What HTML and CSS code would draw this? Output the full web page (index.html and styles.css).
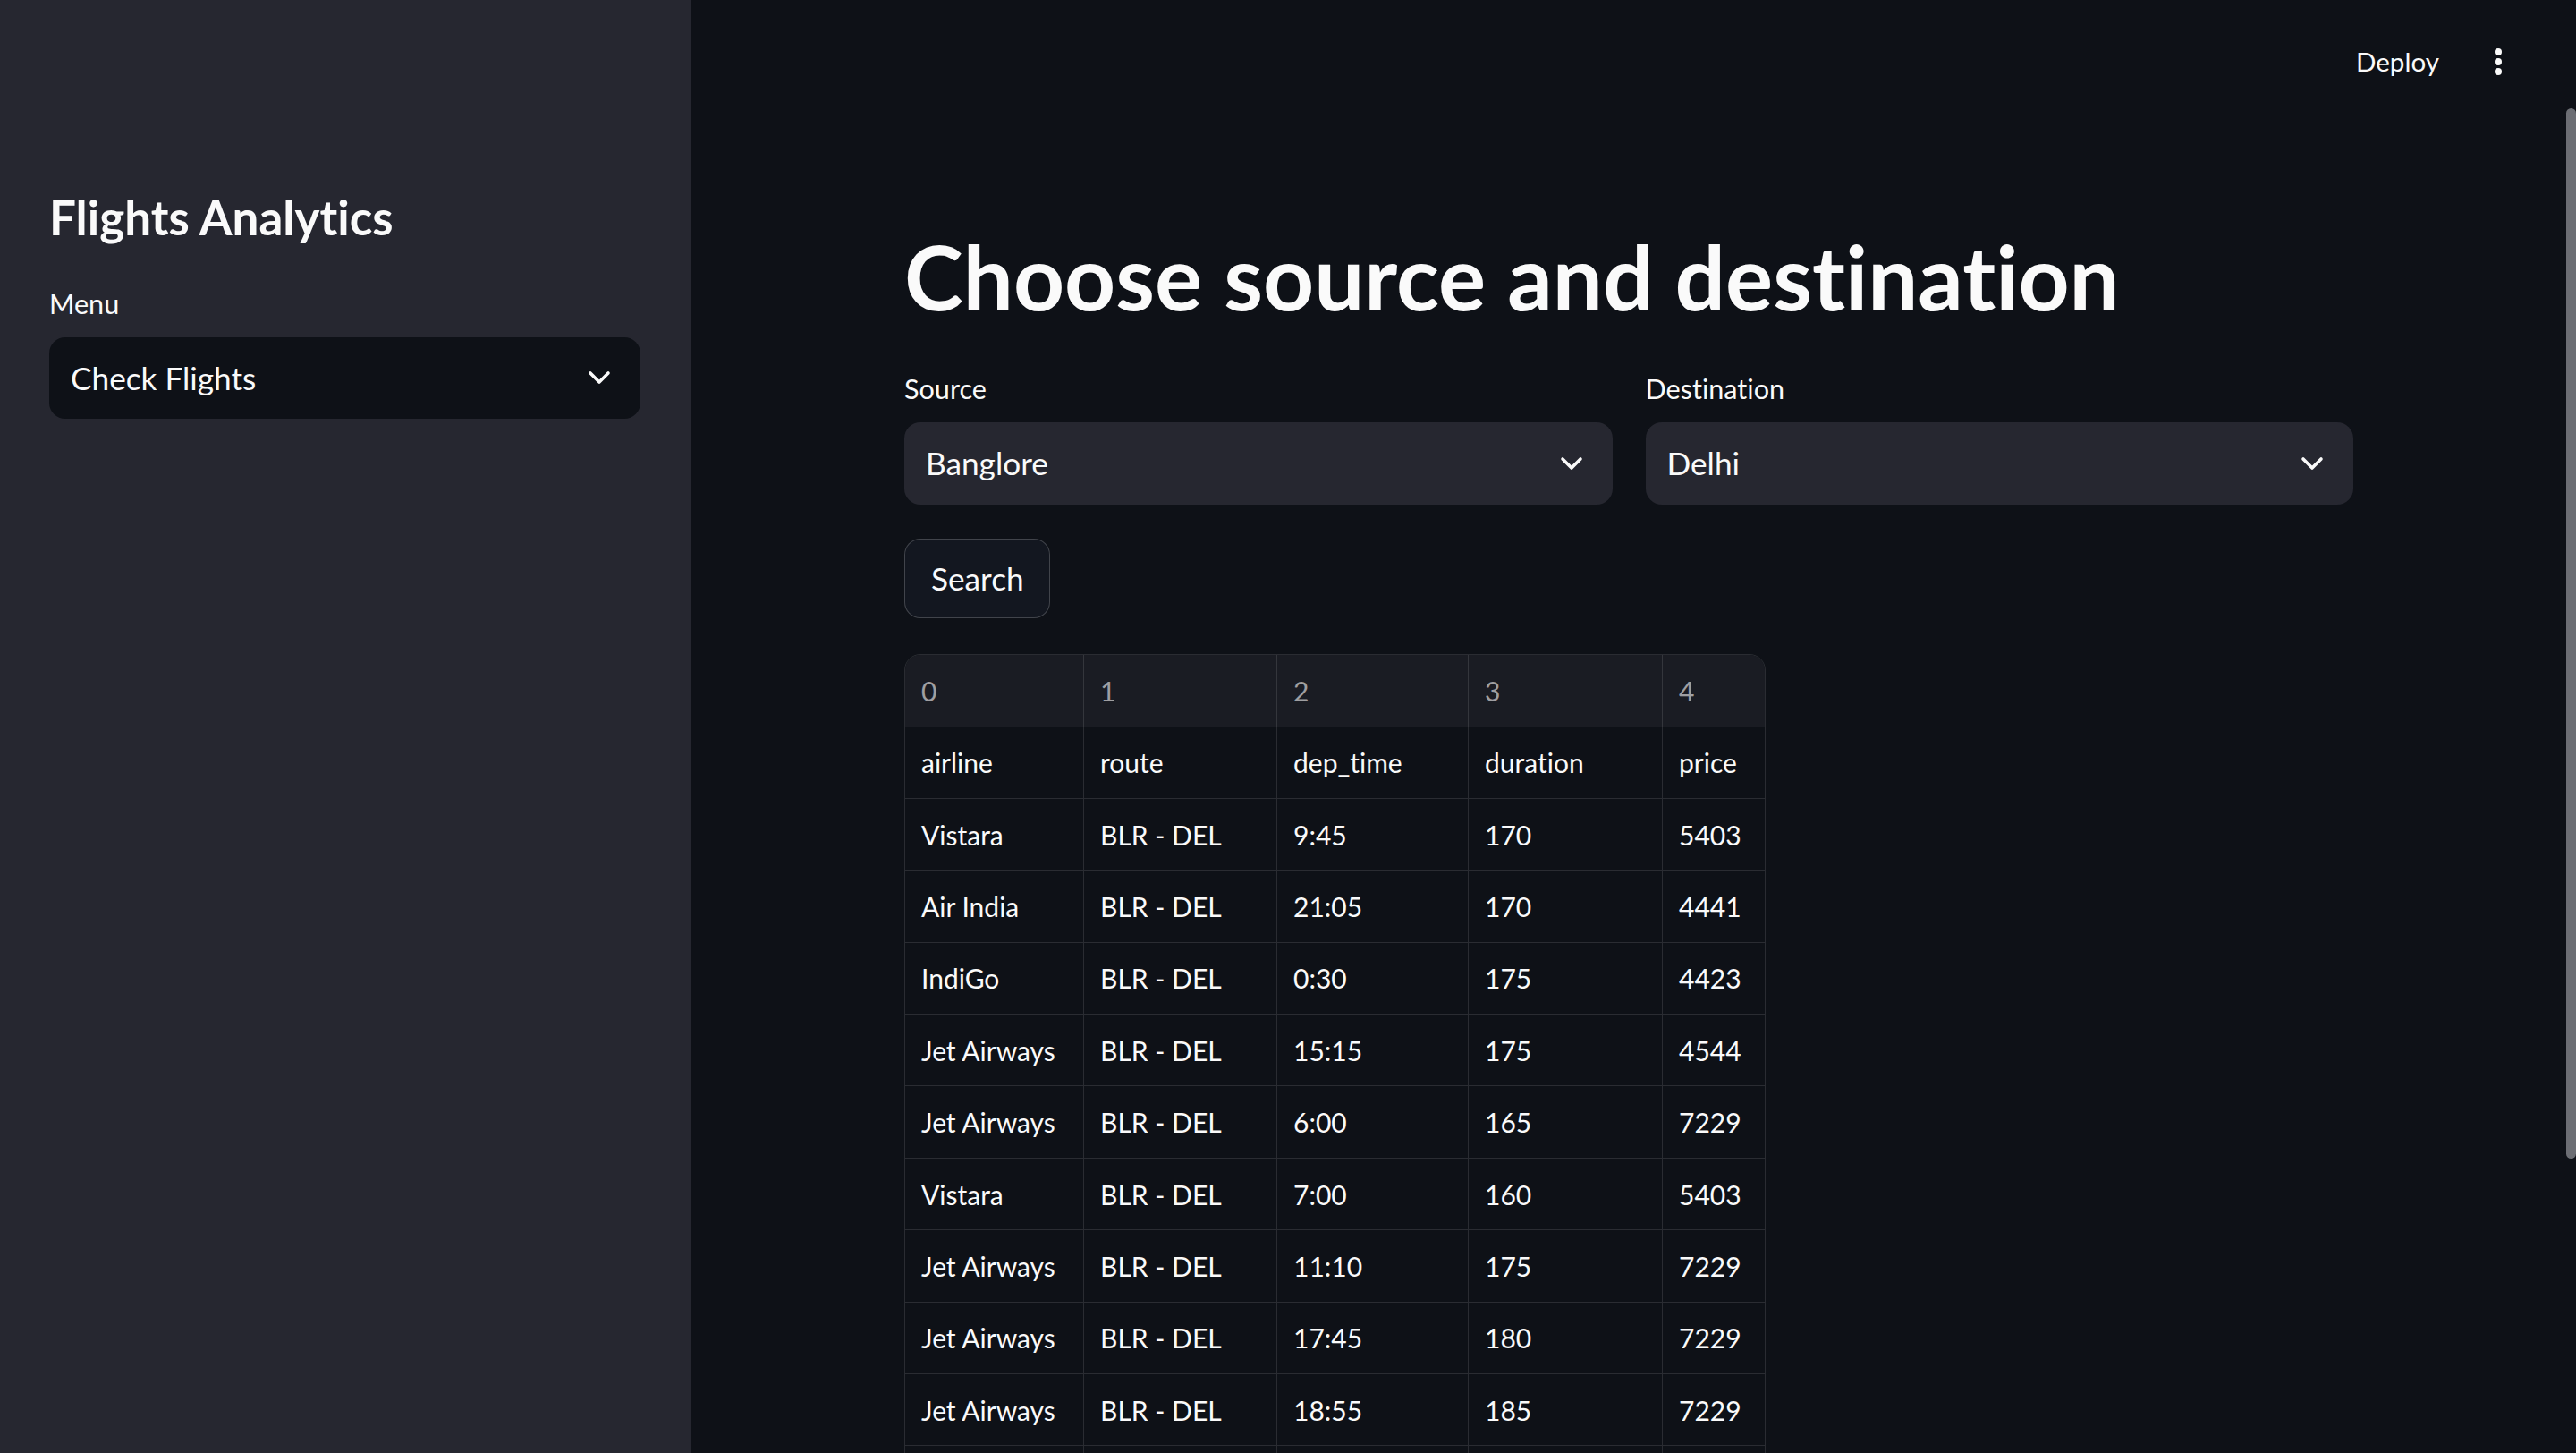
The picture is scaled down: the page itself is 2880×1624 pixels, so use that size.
FILE: index.html
```html
<!DOCTYPE html>
<html lang="en">
<head>
<meta charset="utf-8">
<title>Flights Analytics</title>
<link rel="stylesheet" href="styles.css">
</head>
<body>
<div class="app">
  <aside class="sidebar">
    <h1 class="side-title">Flights Analytics</h1>
    <div class="label side-label">Menu</div>
    <div class="select select-dark">
      <span class="select-value">Check Flights</span>
      <svg class="chev" viewBox="0 0 26 16" width="26" height="16"><path d="M3 3 L13 13 L23 3" /></svg>
    </div>
  </aside>
  <main class="main">
    <header class="topbar">
      <span class="deploy">Deploy</span>
      <span class="kebab"><svg viewBox="0 0 8 30" width="8" height="30"><circle cx="4" cy="4" r="4"/><circle cx="4" cy="15" r="4"/><circle cx="4" cy="26" r="4"/></svg></span>
    </header>
    <section class="block">
      <h1 class="title">Choose source and destination</h1>
      <div class="cols">
        <div class="field">
          <div class="label">Source</div>
          <div class="select">
            <span class="select-value">Banglore</span>
            <svg class="chev" viewBox="0 0 26 16" width="26" height="16"><path d="M3 3 L13 13 L23 3" /></svg>
          </div>
        </div>
        <div class="field">
          <div class="label">Destination</div>
          <div class="select">
            <span class="select-value">Delhi</span>
            <svg class="chev" viewBox="0 0 26 16" width="26" height="16"><path d="M3 3 L13 13 L23 3" /></svg>
          </div>
        </div>
      </div>
      <button class="btn">Search</button>
      <div class="table-wrap">
        <table class="grid">
          <thead>
            <tr class="hrow"><th class="c0">0</th><th class="c1">1</th><th class="c2">2</th><th class="c3">3</th><th class="c4">4</th></tr>
          </thead>
          <tbody>
            <tr><td>airline</td><td>route</td><td>dep_time</td><td>duration</td><td>price</td></tr>
            <tr><td>Vistara</td><td>BLR - DEL</td><td>9:45</td><td>170</td><td>5403</td></tr>
            <tr><td>Air India</td><td>BLR - DEL</td><td>21:05</td><td>170</td><td>4441</td></tr>
            <tr><td>IndiGo</td><td>BLR - DEL</td><td>0:30</td><td>175</td><td>4423</td></tr>
            <tr><td>Jet Airways</td><td>BLR - DEL</td><td>15:15</td><td>175</td><td>4544</td></tr>
            <tr><td>Jet Airways</td><td>BLR - DEL</td><td>6:00</td><td>165</td><td>7229</td></tr>
            <tr><td>Vistara</td><td>BLR - DEL</td><td>7:00</td><td>160</td><td>5403</td></tr>
            <tr><td>Jet Airways</td><td>BLR - DEL</td><td>11:10</td><td>175</td><td>7229</td></tr>
            <tr><td>Jet Airways</td><td>BLR - DEL</td><td>17:45</td><td>180</td><td>7229</td></tr>
            <tr><td>Jet Airways</td><td>BLR - DEL</td><td>18:55</td><td>185</td><td>7229</td></tr>
            <tr class="peek"><td></td><td></td><td></td><td></td><td></td></tr>
          </tbody>
        </table>
      </div>
    </section>
    <div class="scroll-thumb"></div>
  </main>
</div>
</body>
</html>
```

FILE: styles.css
```css
html, body {
  margin: 0;
  padding: 0;
  background: #0e1117;
}
body {
  font-family: "Lato", "Liberation Sans", sans-serif;
  font-variant-ligatures: no-common-ligatures;
  color: #fafafa;
}
.app {
  display: flex;
  height: 1624px;
  overflow: hidden;
}
.sidebar {
  width: 773px;
  flex: none;
  box-sizing: border-box;
  background: #262730;
  padding: 212px 57px 0 55px;
}
.side-title {
  margin: 0;
  font-size: 53px;
  line-height: 62px;
  font-weight: 700;
}
.label {
  font-size: 30.6px;
  line-height: 35.5px;
  margin-bottom: 19px;
}
.side-label {
  margin-top: 48px;
}
.select {
  height: 91px;
  box-sizing: border-box;
  border-radius: 18px;
  background: #262730;
  display: flex;
  align-items: center;
  justify-content: space-between;
  padding: 0 33px 0 24px;
  font-size: 35.2px;
  line-height: 41px;
}
.select-dark {
  background: #0e1117;
}
.chev {
  display: block;
  fill: none;
  stroke: #fafafa;
  stroke-width: 3.6;
  stroke-linecap: round;
  stroke-linejoin: round;
}
.main {
  flex: 1;
  position: relative;
  padding-right: 11px;
  display: flex;
  flex-direction: column;
  overflow: hidden;
}
.topbar {
  height: 138px;
  flex: none;
  display: flex;
  justify-content: flex-end;
  align-items: center;
  padding-right: 56px;
}
.deploy {
  font-size: 29.6px;
  line-height: 36px;
  margin-right: 46px;
}
.kebab {
  width: 40px;
  display: flex;
  justify-content: center;
}
.kebab svg {
  display: block;
  fill: #fafafa;
}
.block {
  width: 1620px;
  margin: 0 auto;
  padding-top: 110px;
}
.title {
  margin: 0;
  font-size: 99.5px;
  line-height: 121px;
  font-weight: 700;
}
.cols {
  margin-top: 48px;
  display: grid;
  grid-template-columns: 1fr 1fr;
  gap: 37px;
}
.cols .select {
  height: 92px;
}
.btn {
  margin-top: 38px;
  height: 89px;
  box-sizing: border-box;
  padding: 0 28px 0 29px;
  border: 1px solid rgba(250, 250, 250, 0.2);
  border-radius: 18px;
  background: #131720;
  color: #fafafa;
  font-family: inherit;
  font-size: 35.2px;
  line-height: 41px;
  display: block;
}
.table-wrap {
  margin-top: 40px;
  width: fit-content;
  border: 1px solid rgba(250, 250, 250, 0.12);
  border-radius: 18px;
  overflow: hidden;
}
.grid {
  border-collapse: separate;
  border-spacing: 0;
  table-layout: fixed;
  width: 961px;
  font-size: 30px;
}
.grid th, .grid td {
  box-sizing: border-box;
  text-align: left;
  vertical-align: middle;
  padding: 0 0 0 18px;
  border-right: 1px solid rgba(250, 250, 250, 0.12);
  border-bottom: 1px solid rgba(250, 250, 250, 0.12);
  white-space: nowrap;
}
.grid th:last-child, .grid td:last-child {
  border-right: none;
}
.grid th {
  font-weight: 400;
  color: rgba(250, 250, 250, 0.6);
  background: #1a1c23;
}
.grid .hrow {
  height: 81px;
}
.grid tbody tr {
  height: 80.4px;
}
.c0 { width: 200px; }
.c1 { width: 216px; }
.c2 { width: 214px; }
.c3 { width: 217px; }
.c4 { width: 114px; }
.scroll-thumb {
  position: absolute;
  right: 0;
  top: 121px;
  width: 11px;
  height: 1174px;
  border-radius: 6px;
  background: #6c6e74;
}
```
